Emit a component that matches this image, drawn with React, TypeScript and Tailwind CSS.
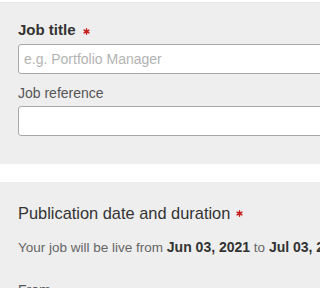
import React from "react";

function Req() {
  return (
    <svg width="7" height="7" viewBox="0 0 10 10" className="inline-block shrink-0">
      <circle cx="5" cy="5" r="2.6" fill="#c8201f" />
      <g stroke="#c8201f" strokeWidth="2" strokeLinecap="round">
        <line x1="5" y1="1" x2="5" y2="9" />
        <line x1="1.5" y1="3" x2="8.5" y2="7" />
        <line x1="1.5" y1="7" x2="8.5" y2="3" />
      </g>
    </svg>
  );
}

export default function App() {
  return (
    <div
      className="relative w-full min-w-[288px] h-[288px] overflow-hidden bg-white"
      style={{ fontFamily: '"Liberation Sans", Arial, sans-serif' }}
    >
      <div className="h-[3px] bg-white border-b border-[#e6e6e6]" />
      <div className="bg-[#eeeeee] pt-[18px] pb-[28px] pl-[18px]">
        <div className="flex items-center gap-[7px] text-[15px] leading-[18px] font-bold text-[#333333]">
          <span>Job title</span>
          <span className="mt-[2px] flex"><Req /></span>
        </div>
        <input
          className="mt-[5px] block w-[calc(100%+40px)] h-[30px] bg-white border border-[#a8a8a8] rounded-[3px] px-[5px] text-[14px] text-[#333] placeholder:text-[#b3b3b3] outline-none"
          placeholder="e.g. Portfolio Manager"
          style={{ fontFamily: '"Liberation Sans", Arial, sans-serif' }}
        />
        <div className="mt-[11px] text-[14px] leading-[17px] text-[#555555]">Job reference</div>
        <input
          className="mt-[4px] block w-[calc(100%+40px)] h-[30px] bg-white border border-[#a8a8a8] rounded-[3px] px-[5px] text-[14px] outline-none"
        />
      </div>
      <div className="h-[18px] bg-white" />
      <div className="bg-[#eeeeee] pt-[21px] pl-[18px] h-[200px] overflow-hidden">
        <div className="flex items-center gap-[6px] text-[16.4px] leading-[20px] text-[#333333] whitespace-nowrap">
          <span>Publication date and duration</span>
          <span className="flex"><Req /></span>
        </div>
        <div className="mt-[16px] text-[13.5px] leading-[16px] text-[#666666] whitespace-nowrap">
          Your job will be live from <b className="font-bold text-[14px] text-[#333333]">Jun 03, 2021</b> to{" "}
          <b className="font-bold text-[14px] text-[#333333]">Jul 03, 2021</b>
        </div>
        <div className="mt-[26px] text-[14px] leading-[16px] text-[#555555]">From</div>
      </div>
    </div>
  );
}
